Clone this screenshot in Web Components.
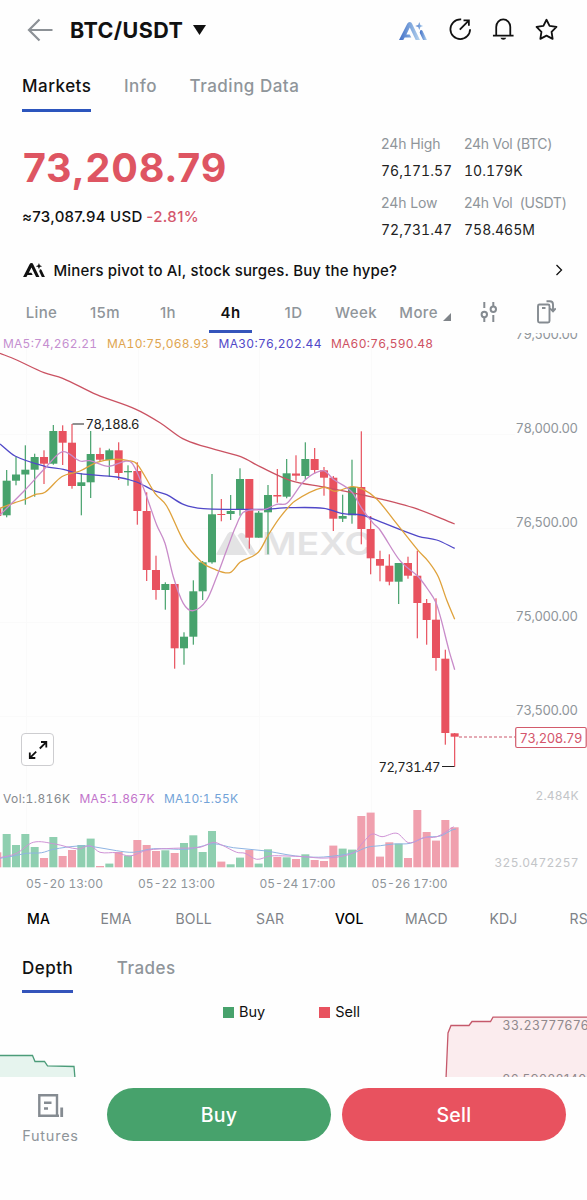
<!DOCTYPE html>
<html lang="en">
<head>
<meta charset="UTF-8">
<meta name="viewport" content="width=device-width, initial-scale=1">
<title>BTC/USDT</title>
<style>
  html, body {
    margin: 0;
    background: #fefefe;
  }

  body {
    font-family: Inter, "Liberation Sans", sans-serif;
    color: #111;
    height: 1200px;
    overflow: hidden;
  }
</style>
</head>
<body>
<market-page></market-page>

<script>
const COLORS = {
  UP: '#47a26c',
  DOWN: '#e8525f',
  GREY: '#8f959a',
  BLUE: '#2c55bd'
};

// x distance between two candles, and the centre of the first one
const STEP = 9.333;
const START = 6.67;

// [direction, body top, body bottom, wick top, wick bottom]
const CANDLES = [
  ['u', 480.7, 515.3, 470, 517.3], ['u', 474.5, 480.7, 456.7, 485.3],
  ['u', 469.7, 474.5, 445.3, 504.7], ['u', 457, 469.7, 453.7, 496.7],
  ['d', 457, 463.7, 450.3, 484], ['u', 431, 463.7, 425, 464.7],
  ['d', 431, 442.7, 425.3, 465], ['d', 442.7, 486, 424, 488.7],
  ['u', 482.3, 486, 473.3, 515.3], ['u', 454, 482.3, 431, 498],
  ['d', 454, 459.7, 447.7, 461.3], ['u', 450.3, 460, 448.7, 477],
  ['d', 450.3, 473, 442.3, 480], ['u', 471, 472.3, 465.3, 485.7],
  ['d', 471, 511, 462.3, 524.7], ['d', 511, 570, 492.3, 581],
  ['d', 570, 590, 555.7, 599.7], ['u', 584, 590, 582.3, 609.7],
  ['d', 584, 648.3, 584, 668.7], ['u', 636.7, 648.3, 632.3, 664.7],
  ['u', 591.3, 636.7, 580.3, 644.7], ['u', 562.3, 591.3, 561, 600],
  ['u', 514.3, 562.3, 474, 563.7], ['d', 514, 515, 499, 521.3],
  ['u', 511, 514, 495, 520], ['u', 479, 510, 468.3, 515.7],
  ['d', 479, 537.7, 479, 548.7], ['u', 512.7, 537.7, 511, 537.7],
  ['u', 495, 512.3, 485, 554.3], ['d', 495, 496.5, 469, 502.7],
  ['u', 473.3, 496.7, 459, 498.3], ['d', 473.5, 475.7, 455.3, 480.7],
  ['u', 459, 476, 442.3, 479.3], ['d', 459, 470, 448, 473.7],
  ['d', 470.3, 477.7, 467, 495.7], ['d', 477.7, 518.7, 476, 531],
  ['u', 516, 518.7, 494.7, 522], ['u', 487, 515.3, 459.7, 523.7],
  ['d', 487, 529, 431.3, 544.3], ['d', 529, 558.3, 516, 574.3],
  ['d', 559, 565.7, 550.7, 581.3], ['d', 565.7, 581.7, 554.3, 585.3],
  ['u', 563, 581.7, 563, 604], ['d', 563, 575.7, 556.7, 578.7],
  ['d', 575.7, 603, 550.7, 638.3], ['d', 603, 620, 599, 644.7],
  ['d', 619.7, 658, 598.3, 670.7], ['d', 658.7, 733, 649.7, 744.7],
  ['d', 733.3, 736.7, 733, 766.7]
];

// bar heights, same order as CANDLES
const VOLUMES = [
  'u33.3', 'u22.3', 'u33.3', 'u20.3', 'd9.3', 'u30.3', 'd11.3', 'd17.3', 'u22.3', 'u28.7',
  'd1.3', 'u3.7', 'd15.3', 'u11.7', 'd27.3', 'd22.3', 'd16.3', 'u17', 'd14.3', 'u24.3',
  'u32', 'u15.3', 'u36.3', 'd5.7', 'u3', 'u9.7', 'd17.3', 'u3.7', 'u18', 'd10.3',
  'u10', 'd8.3', 'u13', 'd7.3', 'd6.3', 'd21.7', 'u18.7', 'u17.7', 'd51.3', 'd54.7',
  'd10.7', 'd25', 'u23.7', 'd9.3', 'd57.3', 'd35.3', 'd26.7', 'd47.3', 'd40'
];

const PRICE_LINES = [
  ['#ca5262', [0,353.3, 16.7,360, 44,372.7, 62.7,378.3, 96.7,394.7, 136,409.3, 160,422.7, 182.7,438.7, 205,446.7, 240.7,456.7, 260,466.7, 290,480.3, 323.3,487, 363.3,495, 413.3,507.7, 454.7,524]],
  ['#5048c8', [0,444, 15,456, 45,466.3, 63.3,469.3, 80,473.7, 116.7,477, 136.7,482, 153.3,490.3, 166.7,494.7, 184,504.7, 203.3,508.7, 240,509.3, 263.3,509.3, 290,507.7, 324,508.3, 343.3,513.7, 361.7,515, 380,521.7, 418.3,536.3, 436.7,540, 454.7,548.3]],
  ['#dfa23c', [0,508.3, 15,502.7, 25,499.3, 35,494.7, 45,492.3, 61.7,476.7, 80,471, 96.7,462.3, 113.3,459.3, 128.3,460.7, 137.3,464.3, 155,493.3, 166.7,506, 184,541.7, 201.7,562.3, 213,568.7, 230,572.7, 240,562.3, 258.3,552.3, 268.3,535, 280,517.3, 295,501, 323.3,487.3, 335,491.3, 351.7,486.7, 363.3,489.3, 376.7,499, 393.3,519.3, 418.3,550.7, 428.3,561.3, 438.3,576.7, 446.7,600, 454.7,619.3]],
  ['#c88bc9', [0,515, 6.7,508.3, 25,490, 45,468.3, 62.7,451.7, 80,461, 90,460.7, 108.3,466.3, 125,461.3, 131.7,462.7, 138.3,475, 146.7,496.7, 156.7,525, 165,543.3, 173.3,576.7, 183.3,603.3, 193.3,610.7, 206.7,600, 216.7,576.7, 226.7,550, 235,528.3, 243.3,512.3, 265,509.3, 276.7,504.3, 287.3,503, 305,480, 323.3,470.7, 333.3,479.3, 351.7,491.7, 361.7,508.3, 373.3,523.3, 380,530, 400,560.7, 418.3,576.7, 428.3,590, 436,602.7, 441.7,621.7, 448.7,649.3, 454.7,669.7]]
];

const VOLUME_LINES = [
  ['#8fb4e3', [0,858.3, 13.3,856, 26.7,853.3, 41.7,852.7, 53.3,849.3, 78.3,846, 93.3,846.7, 116.7,850.7, 133.3,852.3, 153.3,848.7, 186.7,849.3, 200,846.7, 213.3,843.7, 233.3,847.7, 266.7,851, 287,854.7, 303.7,856.7, 323.7,857, 353.7,852.7, 367,847.3, 380.3,845.7, 393.7,844, 410.3,843.3, 425.3,837.3, 440.3,836, 452,830, 456,829]],
  ['#cf93d6', [0,857.7, 16.7,853.3, 33.3,842.3, 55,844, 78.3,849, 90,845.7, 100,852.3, 116.7,852.7, 130,856, 146.7,850.3, 173.3,848.3, 200,847.3, 213.3,842.3, 221.7,845, 236.7,852.3, 245,853.3, 256.7,859.3, 270,856, 287,856, 303.7,856.7, 327,858, 353.7,852.7, 363.7,841.7, 372,834, 382,836.7, 397,833.3, 408.7,842.7, 423.7,837.7, 437,836.7, 453.7,826.7]]
];

// Smooth path through a flat [x, y, x, y, ...] list
function curve(points) {
  const p = [];
  for (let i = 0; i < points.length; i += 2) p.push([points[i], points[i + 1]]);
  let d = `M${p[0][0]} ${p[0][1]}`;
  for (let i = 0; i < p.length - 1; i++) {
    const a = p[i - 1] || p[i];
    const b = p[i];
    const c = p[i + 1];
    const e = p[i + 2] || c;
    const k = (c[0] - b[0]) / 3;
    const s1 = (c[1] - a[1]) / (c[0] - a[0]);
    const s2 = (e[1] - b[1]) / (e[0] - b[0]);
    d += `C${(b[0] + k).toFixed(1)} ${(b[1] + s1 * k).toFixed(1)} ${(c[0] - k).toFixed(1)} ${(c[1] - s2 * k).toFixed(1)} ${c[0]} ${c[1]}`;
  }
  return d;
}

const drawLines = (lines, width) => lines.map(([color, points]) =>
  `<path d="${curve(points)}" fill="none" stroke="${color}" stroke-width="${width}"/>`
).join('');

const AI_SHAPE = `
  <path d="M0 18 8.2 1.8q.9-1.8 2.6-1.8t2.3 1.8L21 18h-4.3L10.800 5.600 7.400 12.400h3.300l1.600 3H5.700L4.300 18z"/>
  <path d="M21.300 8.200q1.600-.7 2.300.8L28 18h-3.900l-3.400-7.200z"/>
  <path d="M20.300 0l1.100 2.900 2.900 1.100-2.900 1.100-1.100 2.900-1.100-2.900-2.900-1.100 2.900-1.100z"/>`;

const ICONS = {
  back: ['0 0 26 24', `<path d="M12.500 1.500 2 12l10.500 10.500M2 12h23.500" fill="none" stroke="#8c9196" stroke-width="2.200"/>`],
  caret: ['0 0 13 10', `<path d="M0 0h13L6.500 10z" fill="#111"/>`],
  ai: ['0 0 28 18', `<defs><linearGradient id="g" x1="0" x2="1"><stop offset="0" stop-color="#426fc6"/><stop offset=".6" stop-color="#85acdf"/><stop offset="1" stop-color="#b9d5ee"/></linearGradient></defs><g fill="url(#g)">${AI_SHAPE}</g>`],
  'ai-dark': ['0 0 28 18', `<g fill="#111">${AI_SHAPE}</g>`],
  share: ['0 0 24 24', `<path d="M13 1.500H12a10.500 10.500 0 1 0 10.500 10.500M11.500 12.500l9.500-9.800M15.500 2.500h5.700v5.700" fill="none" stroke="#111" stroke-width="1.900"/>`],
  bell: ['0 0 24 24', `<path d="M4.500 18.500V9.500a7.500 8 0 0 1 15 0v9M1 18.700h22" fill="none" stroke="#111" stroke-width="1.900"/><path d="M9 21h6.200q-.7 2.200-3.100 2.200T9 21z" fill="#111"/>`],
  star: ['0 0 24 24', `<path d="m12 1.800 3.200 6.400 7.200 1.100-5.100 5.100 1.100 7.400-6.400-3.400-6.400 3.400 1.100-7.400-5.100-5.100 7.200-1.100z" fill="none" stroke="#111" stroke-width="1.900" stroke-linejoin="round"/>`],
  chevron: ['0 0 8 12', `<path d="m1.500 1 5 5-5 5" fill="none" stroke="#111" stroke-width="1.300"/>`],
  corner: ['0 0 8 8', `<path d="M8 0v8H0z" fill="#7f8489"/>`],
  settings: ['0 0 18 20', `<g fill="none" stroke="#858b91" stroke-width="2"><path d="M4.300 0v6M4.300 16v4M13.300 0v4M13.300 13v7" /><circle cx="4.300" cy="12.500" r="2.700"/><circle cx="13.300" cy="7.300" r="2.700"/></g>`],
  rotate: ['0 0 20 24', `<g fill="none" stroke="#858b91" stroke-width="1.900"><rect x="2" y="4.500" width="11.500" height="18" rx="1.500"/><path d="M6 8h3.500M10.500 1.300h3.300q3.200 0 3.200 3.200v6M14 8.300l3 3 2.700-3"/></g>`],
  expand: ['0 0 20 20', `<path d="M13 2h5.300v5.500M18 2.300l-6.200 6.200M1.800 12.500V18h5.500M2.200 17.700l6-6" fill="none" stroke="#111" stroke-width="1.800"/>`],
  futures: ['0 0 26 24', `<path d="M1.300 1.300H19v20.500H1.300zM6 8.800h7.500M6 14.500h4" fill="none" stroke="#858b91" stroke-width="2.400"/><path d="M22.300 13.600h2.800V23h-2.800zM18 20.600h3V23h-3z" fill="#858b91"/>`]
};

class AppIcon extends HTMLElement {
  connectedCallback() {
    const [box, body] = ICONS[this.getAttribute('name')];
    const [, , w, h] = box.split(' ');
    const size = this.getAttribute('width') || w;
    this.attachShadow({ mode: 'open' }).innerHTML = `
      <style>
        :host { display: inline-flex; flex: none; }
        svg { display: block; }
      </style>
      <svg width="${size}" height="${size * h / w}" viewBox="${box}" aria-hidden="true">${body}</svg>
    `;
  }
}

class TopBar extends HTMLElement {
  connectedCallback() {
    this.attachShadow({ mode: 'open' }).innerHTML = `
      <style>
        :host {
          display: flex;
          align-items: center;
          height: 59px;
          padding: 0 29px 0 27px;
        }
        h1 {
          margin: 0 10px 0 17px;
          font-size: 21.500px;
          font-weight: 700;
          letter-spacing: 0.400px;
        }
        .actions {
          display: flex;
          align-items: center;
          gap: 20.500px;
          margin-left: auto;
        }
        .actions app-icon:first-child { margin-right: 2px; padding-top: 3px; }
      </style>
      <app-icon name="back"></app-icon>
      <h1><slot></slot></h1>
      <app-icon name="caret"></app-icon>
      <div class="actions">
        <app-icon name="ai"></app-icon>
        <app-icon name="share" width="22.500"></app-icon>
        <app-icon name="bell" width="22.500"></app-icon>
        <app-icon name="star" width="23"></app-icon>
      </div>
    `;
  }
}

class TabItem extends HTMLElement {
  connectedCallback() {
    this.attachShadow({ mode: 'open' }).innerHTML = `
      <style>
        :host {
          display: flex;
          align-items: center;
          box-sizing: border-box;
          height: 100%;
          border-bottom: 3px solid transparent;
          color: ${COLORS.GREY};
          font-weight: 500;
          white-space: nowrap;
        }
        :host([active]) {
          border-bottom-color: var(--tab-line, ${COLORS.BLUE});
          color: #111;
          font-weight: var(--tab-weight, 500);
        }
      </style>
      <slot></slot>
    `;
  }
}

class PriceSummary extends HTMLElement {
  connectedCallback() {
    this.attachShadow({ mode: 'open' }).innerHTML = `
      <style>
        :host {
          display: flex;
          justify-content: space-between;
          height: 125px;
          padding: 17px 21px 0 22px;
        }
        .price {
          margin: 15px 0 0 1px;
          font-size: 39.500px;
          line-height: 48px;
          font-weight: 700;
          color: #de5562;
          letter-spacing: 0.800px;
        }
        .approx {
          margin-top: 15px;
          font-size: 15px;
          line-height: 20px;
          font-weight: 500;
          letter-spacing: 0.270px;
        }
        .approx span { color: #d4566c; margin-left: -0.500px; letter-spacing: 0.400px; }
        dl {
          display: grid;
          grid-template-columns: 83px 102px;
          grid-auto-rows: 58.500px;
          margin: 6px 0 0;
          font-size: 14px;
        }
        dt {
          line-height: 18px;
          letter-spacing: -0.100px;
          color: ${COLORS.GREY};
          white-space: pre;
        }
        div:nth-child(even) dt { letter-spacing: -0.270px; }
        dd {
          margin: 9px 0 0;
          line-height: 18px;
          color: #222;
          font-variant-numeric: tabular-nums;
        }
      </style>
      <div>
        <div class="price">73,208.79</div>
        <div class="approx">≈73,087.94 USD <span>-2.81%</span></div>
      </div>
      <dl>
        <div><dt>24h High</dt><dd>76,171.57</dd></div>
        <div><dt>24h Vol (BTC)</dt><dd>10.179K</dd></div>
        <div><dt>24h Low</dt><dd>72,731.47</dd></div>
        <div><dt>24h Vol  (USDT)</dt><dd>758.465M</dd></div>
      </dl>
    `;
  }
}

class NewsLine extends HTMLElement {
  connectedCallback() {
    this.attachShadow({ mode: 'open' }).innerHTML = `
      <style>
        :host {
          display: flex;
          align-items: center;
          height: 32px;
          padding: 0 24px 0 23px;
          font-size: 15px;
          font-weight: 500;
          letter-spacing: 0.160px;
        }
        p { margin: 0 auto 0 8.500px; }
      </style>
      <app-icon name="ai-dark" width="22"></app-icon>
      <p><slot></slot></p>
      <app-icon name="chevron"></app-icon>
    `;
  }
}

class IntervalBar extends HTMLElement {
  connectedCallback() {
    this.attachShadow({ mode: 'open' }).innerHTML = `
      <style>
        :host {
          display: grid;
          grid-template-columns: 83px 44px 82px 43px 83px 42px 66px 20px 51px 63px;
          height: 47px;
          font-size: 15px;
          --tab-weight: 600;
          --tab-line: #3454bb;
        }
        tab-item { justify-content: center; letter-spacing: 0.400px; padding-top: 8px; }
        .more { justify-content: flex-end; padding-right: 5px; }
        app-icon { align-self: center; justify-self: center; padding-top: 5px; }
        app-icon[name="corner"] { padding-top: 15px; justify-self: start; }
      </style>
      <tab-item>Line</tab-item>
      <tab-item>15m</tab-item>
      <tab-item>1h</tab-item>
      <tab-item active>4h</tab-item>
      <tab-item>1D</tab-item>
      <tab-item>Week</tab-item>
      <tab-item class="more">More</tab-item>
      <app-icon name="corner"></app-icon>
      <app-icon name="settings"></app-icon>
      <app-icon name="rotate"></app-icon>
    `;
  }
}

class CandleChart extends HTMLElement {
  connectedCallback() {
    const candles = CANDLES.map(([dir, top, bottom, high, low], i) => {
      const x = START + i * STEP;
      return `<g fill="${dir === 'u' ? COLORS.UP : COLORS.DOWN}">
        <rect x="${x - 0.600}" y="${high}" width="1.200" height="${low - high}"/>
        <rect x="${x - 4}" y="${top}" width="8" height="${bottom - top}"/>
      </g>`;
    }).join('');

    const volumes = VOLUMES.map((v, i) => {
      const h = parseFloat(v.slice(1));
      return `<rect x="${START + i * STEP - 4}" y="${867.300 - h}" width="8" height="${h}" fill="${v[0] === 'u' ? '#8fcfb0' : '#f0a0ae'}"/>`;
    }).join('');

    const label = (x, y, text, width, color, size = 12) =>
      `<text x="${x}" y="${y}" textLength="${width}" fill="${color}" font-size="${size}">${text}</text>`;

    this.attachShadow({ mode: 'open' }).innerHTML = `
      <style>
        :host { display: block; position: relative; height: 563px; }
        svg { display: block; font-variant-numeric: tabular-nums; }
        .expand {
          position: absolute;
          left: 21px;
          top: 400px;
          width: 33px;
          height: 33px;
          display: flex;
          align-items: center;
          justify-content: center;
          box-sizing: border-box;
          border: 1px solid #cdcdd0;
          border-radius: 4px;
          background: #fff;
        }
      </style>
      <svg width="587" height="563" viewBox="0 333 587 563">
        <path d="M26.500 333v534M138.500 333v534M259.500 333v534M371.500 333v534M0 434.500h515M0 528.500h515M0 622.500h515M0 716.500h515" stroke="#fafafa"/>
        <g fill="#e3e3e4">
          <path d="M216.500 553.500 227.500 534q3.500-4.500 7 0L247.500 555H218q-2.200 0-1.500-1.500z"/>
          <path d="M237.500 535.500q4-5.500 8 0l10.500 18q.8 1.500-1.500 1.500h-4.500z"/>
          <text x="262" y="554.500" textLength="110" lengthAdjust="spacingAndGlyphs" font-size="31" font-weight="600">MEXC</text>
        </g>
        <rect x="0" y="508.300" width="1.300" height="7.700" fill="${COLORS.DOWN}"/>
        ${candles}
        ${drawLines(PRICE_LINES, 1.300)}
        <path d="M72.500 424h11.500M442 766.500h12.500" stroke="#222" stroke-width="1.200"/>
        <path d="M459 737h57" stroke="#c9566a" stroke-width="1.200" stroke-dasharray="3 2"/>
        <rect x="515.700" y="727.500" width="70.500" height="20" rx="1.500" fill="#fff" stroke="#d25a6b" stroke-width="1.200"/>
        ${label(519.500, 742.500, '73,208.79', 63, '#d4566c', 13)}
        ${label(85.500, 429, '78,188.6', 54, '#222', 13)}
        ${label(378.500, 771.500, '72,731.47', 62, '#222', 13)}
        ${label(515.500, 339, '79,500.00', 62.500, COLORS.GREY, 13)}
        ${label(515.500, 433, '78,000.00', 62.500, COLORS.GREY, 13)}
        ${label(515.500, 527, '76,500.00', 62.500, COLORS.GREY, 13)}
        ${label(515.500, 621, '75,000.00', 62.500, COLORS.GREY, 13)}
        ${label(515.500, 715, '73,500.00', 62.500, COLORS.GREY, 13)}
        ${label(3, 347.500, 'MA5:74,262.21', 94, '#c58fd0')}
        ${label(107, 347.500, 'MA10:75,068.93', 102, '#dfa550')}
        ${label(218.500, 347.500, 'MA30:76,202.44', 103, '#5048c8')}
        ${label(331, 347.500, 'MA60:76,590.48', 102, '#ce5162')}
        <rect x="0" y="${867.300 - 15}" width="1.300" height="15" fill="#f0a0ae"/>
        ${volumes}
        ${drawLines(VOLUME_LINES, 1)}
        ${label(3, 802.500, 'Vol:1.816K', 67, '#85898d')}
        ${label(79.500, 802.500, 'MA5:1.867K', 75, '#c274cb')}
        ${label(164, 802.500, 'MA10:1.55K', 74, '#72a3d8')}
        ${label(535.500, 800, '2.484K', 43, '#c3c5c8')}
        ${label(494.500, 866.500, '325.0472257', 84, '#c3c5c8')}
        ${label(26, 887.500, '05-20 13:00', 77, COLORS.GREY)}
        ${label(138, 887.500, '05-22 13:00', 77, COLORS.GREY)}
        ${label(259.500, 887.500, '05-24 17:00', 76, COLORS.GREY)}
        ${label(371.500, 887.500, '05-26 17:00', 76, COLORS.GREY)}
      </svg>
      <div class="expand"><app-icon name="expand"></app-icon></div>
    `;
  }
}

class IndicatorBar extends HTMLElement {
  connectedCallback() {
    this.attachShadow({ mode: 'open' }).innerHTML = `
      <style>
        :host {
          display: grid;
          grid-template-columns: 73.500px 75px 80.500px 79px 70px 84.500px 80px 40px;
          align-items: center;
          height: 45px;
          padding-left: 27px;
          overflow: hidden;
          font-size: 14px;
          letter-spacing: 0.150px;
          color: #7e8388;
        }
        b { font-weight: 500; color: #000; }
      </style>
      <b>MA</b><span>EMA</span><span>BOLL</span><span>SAR</span>
      <b>VOL</b><span>MACD</span><span>KDJ</span><span>RSI</span>
    `;
  }
}

class DepthChart extends HTMLElement {
  connectedCallback() {
    this.attachShadow({ mode: 'open' }).innerHTML = `
      <style>
        :host { display: grid; align-items: start; height: 84px; overflow: hidden; }
        .legend, svg { grid-area: 1 / 1; display: block; }
        .legend {
          display: flex;
          gap: 54px;
          padding: 9px 0 0 223px;
          font-size: 14.500px;
          line-height: 20px;
        }
        .legend span { display: flex; align-items: center; gap: 5px; }
        .legend i { width: 11px; height: 11px; background: var(--swatch); }
      </style>
      <svg width="587" height="84" viewBox="0 993 587 84">
        <path d="M0 1055.500h32.500l2.500 6h9.500l3 4.300 26.500.7 1 12H0z" fill="#e6f4ee"/>
        <path d="M0 1055.500h32.500l2.500 6h9.500l3 4.300 26.500.7 1 12" fill="none" stroke="#4b9c79" stroke-width="1.300"/>
        <path d="M446 1079l2-46 3-7.500h18l3-4h18.500l2.500-4.500h95v63z" fill="#fbecee"/>
        <path d="M446 1079l2-46 3-7.500h18l3-4h18.500l2.500-4.300h95" fill="none" stroke="#c5596b" stroke-width="1.300"/>
        <g fill="#8f888c" font-size="12.500">
          <text x="502.500" y="1029.500" textLength="92">33.237776761</text>
          <text x="502.500" y="1083.500" textLength="92">26.590221409</text>
        </g>
      </svg>
      <div class="legend">
        <span style="--swatch: ${COLORS.UP}"><i></i>Buy</span>
        <span style="--swatch: ${COLORS.DOWN}"><i></i>Sell</span>
      </div>
    `;
  }
}

class TradeBar extends HTMLElement {
  connectedCallback() {
    this.attachShadow({ mode: 'open' }).innerHTML = `
      <style>
        :host {
          display: grid;
          grid-template-columns: 74px 224px 224px;
          column-gap: 11px;
          height: 123px;
          padding: 11px 21px 0 22px;
          box-sizing: border-box;
        }
        .futures {
          display: flex;
          flex-direction: column;
          align-items: center;
          gap: 9px;
          width: 57px;
          padding-top: 6px;
          font-size: 14.500px;
          line-height: 18px;
          letter-spacing: 0.750px;
          color: ${COLORS.GREY};
        }
        button {
          height: 53px;
          border: 0;
          border-radius: 27px;
          background: ${COLORS.UP};
          color: #fff;
          font: 500 19.500px Inter, sans-serif;
          letter-spacing: 0.300px;
        }
        .sell { background: ${COLORS.DOWN}; }
      </style>
      <div class="futures"><app-icon name="futures"></app-icon>Futures</div>
      <button class="buy">Buy</button>
      <button class="sell">Sell</button>
    `;
  }
}

class MarketPage extends HTMLElement {
  connectedCallback() {
    this.attachShadow({ mode: 'open' }).innerHTML = `
      <style>
        :host { display: block; width: 587px; overflow: hidden; }
        nav {
          display: flex;
          box-sizing: border-box;
          padding-left: 22px;
          font-size: 17px;
          letter-spacing: 0.500px;
        }
        nav tab-item { padding-top: 4px; }
        .sections { height: 53px; gap: 32.500px; }
        .details { height: 52px; gap: 43.500px; --tab-line: #3454bb; }
      </style>
      <top-bar>BTC/USDT</top-bar>
      <nav class="sections">
        <tab-item active>Markets</tab-item>
        <tab-item>Info</tab-item>
        <tab-item>Trading Data</tab-item>
      </nav>
      <price-summary></price-summary>
      <news-line>Miners pivot to AI, stock surges. Buy the hype?</news-line>
      <interval-bar></interval-bar>
      <candle-chart></candle-chart>
      <indicator-bar></indicator-bar>
      <nav class="details">
        <tab-item active>Depth</tab-item>
        <tab-item>Trades</tab-item>
      </nav>
      <depth-chart></depth-chart>
      <trade-bar></trade-bar>
    `;
  }
}

customElements.define('app-icon', AppIcon);
customElements.define('tab-item', TabItem);
customElements.define('top-bar', TopBar);
customElements.define('price-summary', PriceSummary);
customElements.define('news-line', NewsLine);
customElements.define('interval-bar', IntervalBar);
customElements.define('candle-chart', CandleChart);
customElements.define('indicator-bar', IndicatorBar);
customElements.define('depth-chart', DepthChart);
customElements.define('trade-bar', TradeBar);
customElements.define('market-page', MarketPage);
</script>
</body>
</html>
